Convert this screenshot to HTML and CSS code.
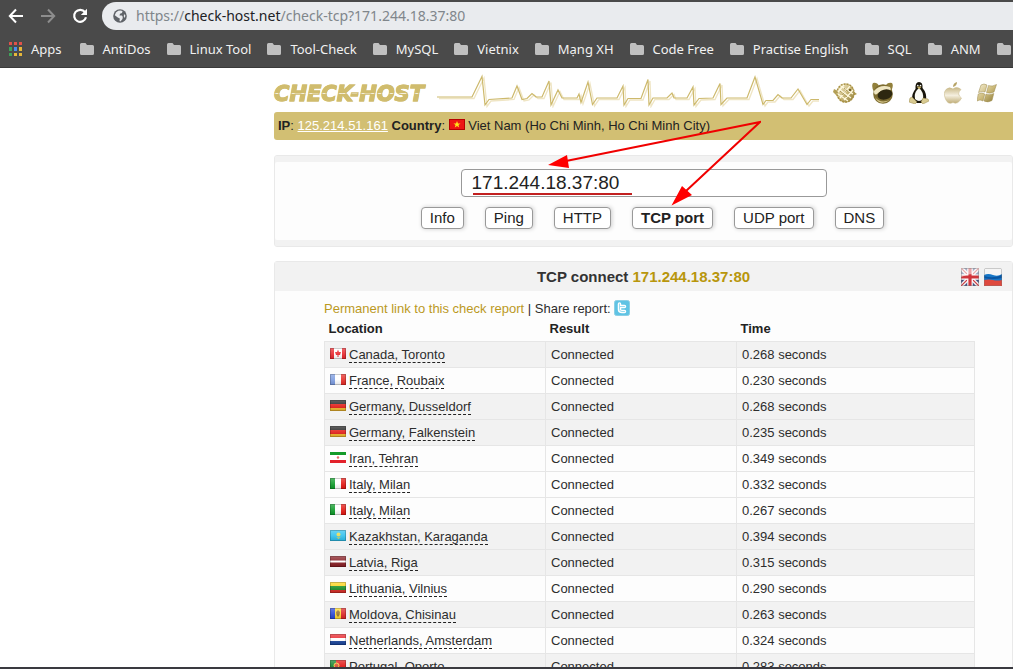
FILE: index.html
```html
<!DOCTYPE html>
<html lang="en">
<head>
<meta charset="utf-8">
<title>Check host - TCP connect</title>
<link rel="stylesheet" href="styles.css">
</head>
<body>
<svg class="defs" aria-hidden="true">
  <defs>
    <linearGradient id="gold" x1="0" y1="0" x2="1" y2="1"><stop offset="0" stop-color="#f6f0d8"/><stop offset=".5" stop-color="#cdbb7c"/><stop offset="1" stop-color="#8a7836"/></linearGradient>
    <linearGradient id="apple" x1="0" y1="0" x2="0" y2="1"><stop offset="0" stop-color="#c9b988"/><stop offset=".5" stop-color="#f5efdf"/><stop offset="1" stop-color="#c0ae78"/></linearGradient>
    <linearGradient id="gloss" x1="0" y1="0" x2="0" y2="1"><stop offset="0" stop-color="#fff" stop-opacity=".3"/><stop offset=".5" stop-color="#fff" stop-opacity=".12"/><stop offset="1" stop-color="#000" stop-opacity=".1"/></linearGradient>
    <symbol id="folder" viewBox="0 0 14 12"><path d="M1.500 0H5.500L7 2H12.500Q14 2 14 3.500V10.500Q14 12 12.500 12H1.500Q0 12 0 10.500V1.500Q0 0 1.500 0Z" fill="#c0c0c0"/></symbol>
    <symbol id="shine" viewBox="0 0 16 11"><rect width="16" height="11" fill="url(#gloss)"/><rect x=".5" y=".5" width="15" height="10" fill="none" stroke="#000" stroke-opacity=".2"/></symbol>
  </defs>
</svg>

<header class="browser">
  <div class="toolbar">
    <button class="nav" aria-label="Back"><svg width="16" height="16" viewBox="0 0 16 16"><path d="M15 8H2M8 1.500L1.800 8L8 14.500" fill="none" stroke="#fff" stroke-width="2"/></svg></button>
    <button class="nav" aria-label="Forward"><svg width="16" height="16" viewBox="0 0 16 16"><path d="M1 8H14M8 1.500L14.200 8L8 14.500" fill="none" stroke="#8d8d8d" stroke-width="2"/></svg></button>
    <button class="nav" aria-label="Reload"><svg width="16" height="16" viewBox="0 0 16 16"><path d="M13 4.200A6 6 0 1 0 14 9.300" fill="none" stroke="#fff" stroke-width="2.200"/><path d="M15 .8V7H8.800Z" fill="#fff"/></svg></button>
    <div class="omnibox">
      <svg width="14" height="14" viewBox="0 0 14 14"><circle cx="7" cy="7" r="6.800" fill="#5f6368"/><path d="M7.500 1.500L9.500 2L9 4L7 4.800L6.500 6.500H9L9.800 8L9.500 10L7.500 12.500L6.500 12L6.800 9.500L4.800 8.500L1.800 6.300Q2.400 3 5.200 1.800Z M11 5L12.400 6.500L11.800 9L10.800 7.500Z" fill="#e9ebee"/></svg>
      <div class="url" role="textbox" contenteditable="true" spellcheck="false" aria-label="Address">https://<b>check-host.net</b>/check-tcp?171.244.18.37:80</div>
    </div>
  </div>
  <nav class="bookmarks">
    <a href="#" class="apps"><svg width="13" height="14" viewBox="0 0 13 14"><path d="M0 0h3v3h-3zM5 0h3v3h-3zM10 0h3v3h-3z" fill="#e0524a"/><path d="M0 5h3v4h-3zM0 11h3v3h-3z" fill="#3fa35a"/><path d="M5 5h3v4h-3z" fill="#4a8df0"/><path d="M10 5h3v4h-3zM10 11h3v3h-3zM5 11h3v3h-3z" fill="#e6b73a"/></svg>Apps</a>
    <a href="#"><svg width="14" height="12"><use href="#folder"/></svg>AntiDos</a>
    <a href="#"><svg width="14" height="12"><use href="#folder"/></svg>Linux Tool</a>
    <a href="#"><svg width="14" height="12"><use href="#folder"/></svg>Tool-Check</a>
    <a href="#"><svg width="14" height="12"><use href="#folder"/></svg>MySQL</a>
    <a href="#"><svg width="14" height="12"><use href="#folder"/></svg>Vietnix</a>
    <a href="#"><svg width="14" height="12"><use href="#folder"/></svg>Mạng XH</a>
    <a href="#"><svg width="14" height="12"><use href="#folder"/></svg>Code Free</a>
    <a href="#"><svg width="14" height="12"><use href="#folder"/></svg>Practise English</a>
    <a href="#"><svg width="14" height="12"><use href="#folder"/></svg>SQL</a>
    <a href="#"><svg width="14" height="12"><use href="#folder"/></svg>ANM</a>
    <a href="#" aria-label="More"><svg width="14" height="12"><use href="#folder"/></svg></a>
  </nav>
</header>

<div class="viewport">
<main class="page">
  <div class="masthead">
    <a href="#" class="logo">CHECK-HOST</a>
    <svg class="pulse" width="382" height="34" viewBox="437 72 382 34" fill="none">
      <path transform="translate(2 1.500)" stroke="#efe5c4" stroke-width="1.300" d="M437 95H472L482 74.500L485 103L489 97.500L512 96L517 84L522 97.500L527 96.500L532 91.500L536 95H542L549 79L551 103L558 88L562 96H577L579 92L581 100.500L588 80L592.500 102.500L597 96H617L623 84L624 103L628 96.500H641L648 77.500L649 103L653 96H667L672 91L674 96H687L693 85L694 103L699 96.500L713 96L720 81.500L721 102.500L727 96H747L755 75L763 102.500L766 98.500H773L778 92.500L782 96H791L798 87L807 102.500L811 97.500H819"/>
      <path stroke="#cdb96c" stroke-width="1.200" d="M437 95H472L482 74.500L485 103L489 97.500L512 96L517 84L522 97.500L527 96.500L532 91.500L536 95H542L549 79L551 103L558 88L562 96H577L579 92L581 100.500L588 80L592.500 102.500L597 96H617L623 84L624 103L628 96.500H641L648 77.500L649 103L653 96H667L672 91L674 96H687L693 85L694 103L699 96.500L713 96L720 81.500L721 102.500L727 96H747L755 75L763 102.500L766 98.500H773L778 92.500L782 96H791L798 87L807 102.500L811 97.500H819"/>
    </svg>
    <div class="systems">
      <svg width="24" height="22" viewBox="0 0 24 22"><path d="M1 7L5 9L4 14L0 10ZM20 9L24 12L20 14Z" fill="#b39f55"/><ellipse cx="12.500" cy="11" rx="9" ry="9.500" fill="url(#gold)"/><ellipse cx="12.500" cy="11" rx="8.500" ry="9" fill="none" stroke="#a99245" stroke-width="1.500" stroke-dasharray="2 1"/><path d="M6 7L18 16M8 4L20 12M5 12L15 19M7 16L17 4M11 18L20 8M5 10L11 3" stroke="#fff9df" stroke-width="1.200"/><path d="M7 9L14 15M11 6L17 11M9 13L14 8" stroke="#97823a" stroke-dasharray="1 1"/><circle cx="17" cy="8" r="1" fill="#5a4c1b"/></svg>
      <svg width="22" height="22" viewBox="0 0 22 22"><path d="M1 1Q5 0 7 4L2 10Q-1 4 1 1ZM20 1Q16 0 14 3L19 9Q22 4 20 1Z" fill="#92803b"/><circle cx="11" cy="12" r="9.800" fill="#7d6c30"/><path d="M2 9Q8 2 18 5Q20 8 17 9Q10 7 5 12Q2 14 2 9Z" fill="#efe6c2"/><ellipse cx="13" cy="12.500" rx="7.500" ry="5" transform="rotate(-15 13 12.500)" fill="#2d2710"/><path d="M3 15Q8 22 18 18Q12 22 7 20Q4 18 3 15Z" fill="#d4c58b"/></svg>
      <svg width="20" height="22" viewBox="0 0 20 22"><path d="M10 0Q14 0 13.500 6Q18 11 17 18L13 21H6L3 17Q3 11 6.500 7Q6 0 10 0Z" fill="#17140a"/><path d="M10 6Q15 10 14 17Q10 21 6 17Q5 11 8 8Z" fill="#fbfbf5"/><path d="M7.500 4.500H12.500L10.500 7.500Z" fill="#c5b064"/><path d="M3 15L8 20L6 22L0 20L1 16ZM14 16L19 17L20 19L14 22L12 20Z" fill="#d8ca91" stroke="#9b8949" stroke-width=".5"/><circle cx="8.800" cy="3.500" r=".8" fill="#fff"/><circle cx="11.500" cy="3.500" r=".8" fill="#fff"/></svg>
      <svg width="18" height="22" viewBox="0 0 18 22"><path d="M9 5Q9 1 13 0Q13 4 9 5Z" fill="#b6a366"/><path d="M9 7Q13 4 17 7.500Q12 12 17.500 16Q14 23 9 20.500Q4 23 1.500 17Q-1 11 2 7.500Q5 4.500 9 7Z" fill="url(#apple)" stroke="#cbbc8e" stroke-width=".6"/></svg>
      <svg width="20" height="20" viewBox="0 0 20 20"><path d="M4 2Q7 0 10 2L8 9Q5 8 1.500 9.500ZM11.500 2.500Q15 4 19.500 1.500L17 9Q13 11 9.500 9.500ZM1.200 11Q5 9 7.800 11L6 18Q3 16 0 18ZM9 11Q13 12.500 16.800 10.500L15 17.500Q11 20 7 18Z" fill="url(#gold)" stroke="#9c8a4c" stroke-width=".5"/></svg>
    </div>
  </div>

  <p class="ipbar"><b>IP</b>: <a href="#">125.214.51.161</a> <b>Country</b>: <svg class="flag" width="16" height="11" viewBox="0 0 16 11"><path d="M0 0h16v11h-16z" fill="#ed1515"/><path d="M8 2L9 4.500H11.500L9.500 6L10.200 8.500L8 7L5.800 8.500L6.500 6L4.500 4.500H7Z" fill="#ffe21a"/><rect x=".5" y=".5" width="15" height="10" fill="none" stroke="#b80000"/></svg> Viet Nam (Ho Chi Minh, Ho Chi Minh City)</p>

  <form class="panel query">
    <input type="text" value="171.244.18.37:80" aria-label="Host" spellcheck="false">
    <div class="actions">
      <button type="button">Info</button>
      <button type="button">Ping</button>
      <button type="button">HTTP</button>
      <button type="button" class="active">TCP port</button>
      <button type="button">UDP port</button>
      <button type="button">DNS</button>
    </div>
  </form>

  <svg class="marks" width="214" height="88" viewBox="547 120 214 88" aria-hidden="true">
    <path d="M686 191L760 122L566 161" fill="none" stroke="#f00000" stroke-width="2"/>
    <path d="M548 165L567 155L569 168ZM671.500 205.500L682 186L692 195Z" fill="#f00"/>
  </svg>

  <section class="panel report">
    <header class="title">
      <h1>TCP connect <span>171.244.18.37:80</span></h1>
      <div class="langs">
        <button aria-label="English"><svg width="18" height="18" viewBox="0 0 18 18"><rect width="18" height="18" rx="1" fill="#3d4d80"/><path d="M0 0L18 18M18 0L0 18" stroke="#f4f0f0" stroke-width="4"/><path d="M0 0L18 18M18 0L0 18" stroke="#cc3b42" stroke-width="1.200"/><path d="M9 0V18M0 9H18" stroke="#fff" stroke-width="5.500"/><path d="M9 0V18M0 9H18" stroke="#d0353c" stroke-width="3.200"/><path d="M0 0H18V6Q9 5 0 9Z" fill="#fff" opacity=".55"/><rect x=".5" y=".5" width="17" height="17" rx="1" fill="none" stroke="#777" stroke-opacity=".4"/></svg></button>
        <button aria-label="Russian"><svg width="18" height="18" viewBox="0 0 18 18"><rect width="18" height="18" rx="1" fill="#f5f5f5"/><path d="M0 7Q4 5 9 7T18 6V13H0Z" fill="#1676c7"/><path d="M0 12Q5 11 9 12T18 12V18H0Z" fill="#df493e"/><path d="M0 8Q9 11 18 7V10Q9 12 0 10Z" fill="#0a55a2"/><rect x=".5" y=".5" width="17" height="17" rx="1" fill="none" stroke="#777" stroke-opacity=".35"/></svg></button>
      </div>
    </header>
    <div class="content">
      <p class="share"><a href="#">Permanent link to this check report</a> | Share report: <a href="#" aria-label="Twitter"><svg width="16" height="16" viewBox="0 0 16 16"><rect x=".5" y=".5" width="15" height="15" rx="2" fill="#5fc3e4" stroke="#8bcfe5"/><path d="M5.500 4V9.500Q5.500 11.500 8 11.500H10.500M5.500 6.500H10.500" fill="none" stroke="#fff" stroke-width="3.500" stroke-linecap="round"/><path d="M5.500 4V9.500Q5.500 11.500 8 11.500H10.500M5.500 6.500H10.500" fill="none" stroke="#9bdcf0" stroke-width="1" stroke-linecap="round"/></svg></a></p>
      <table>
        <colgroup><col class="c-loc"><col class="c-res"><col></colgroup>
        <thead><tr><th scope="col">Location</th><th scope="col">Result</th><th scope="col">Time</th></tr></thead>
        <tbody>
          <tr class="shade"><td><svg class="flag" width="16" height="11" viewBox="0 0 16 11"><path d="M0 0h16v11H0z" fill="#fff"/><path d="M0 0h4v11H0zM12 0h4v11h-4z" fill="#e8252b"/><path d="M8 1.500L9 4L11 4L10 7H8.500V9H7.500V7H6L5 4L7 4Z" fill="#e8252b"/><use href="#shine"/></svg><span>Canada, Toronto</span></td><td>Connected</td><td>0.268 seconds</td></tr>
          <tr><td><svg class="flag" width="16" height="11" viewBox="0 0 16 11"><path d="M0 0h16v11H0z" fill="#fff"/><path d="M0 0h5v11H0z" fill="#7b9be0"/><path d="M11 0h5v11h-5z" fill="#e62a25"/><use href="#shine"/></svg><span>France, Roubaix</span></td><td>Connected</td><td>0.230 seconds</td></tr>
          <tr class="shade"><td><svg class="flag" width="16" height="11" viewBox="0 0 16 11"><path d="M0 0h16v4H0z" fill="#222"/><path d="M0 4h16v4H0z" fill="#e31b15"/><path d="M0 8h16v3H0z" fill="#f0b62b"/><use href="#shine"/></svg><span>Germany, Dusseldorf</span></td><td>Connected</td><td>0.268 seconds</td></tr>
          <tr class="shade"><td><svg class="flag" width="16" height="11" viewBox="0 0 16 11"><path d="M0 0h16v4H0z" fill="#222"/><path d="M0 4h16v4H0z" fill="#e31b15"/><path d="M0 8h16v3H0z" fill="#f0b62b"/><use href="#shine"/></svg><span>Germany, Falkenstein</span></td><td>Connected</td><td>0.235 seconds</td></tr>
          <tr><td><svg class="flag" width="16" height="11" viewBox="0 0 16 11"><path d="M0 0h16v11H0z" fill="#fff"/><path d="M0 0h16v3H0z" fill="#149b2a"/><path d="M0 8h16v3H0z" fill="#e3222b"/><circle cx="8" cy="5.500" r="1.200" fill="#e46a6a"/></svg><span>Iran, Tehran</span></td><td>Connected</td><td>0.349 seconds</td></tr>
          <tr><td><svg class="flag" width="16" height="11" viewBox="0 0 16 11"><path d="M0 0h16v11H0z" fill="#fff"/><path d="M0 0h5v11H0z" fill="#0b9a27"/><path d="M11 0h5v11h-5z" fill="#e3140f"/><use href="#shine"/></svg><span>Italy, Milan</span></td><td>Connected</td><td>0.332 seconds</td></tr>
          <tr><td><svg class="flag" width="16" height="11" viewBox="0 0 16 11"><path d="M0 0h16v11H0z" fill="#fff"/><path d="M0 0h5v11H0z" fill="#0b9a27"/><path d="M11 0h5v11h-5z" fill="#e3140f"/><use href="#shine"/></svg><span>Italy, Milan</span></td><td>Connected</td><td>0.267 seconds</td></tr>
          <tr class="shade"><td><svg class="flag" width="16" height="11" viewBox="0 0 16 11"><path d="M0 0h16v11H0z" fill="#2cc0ee"/><circle cx="8.500" cy="4.500" r="2" fill="#e6d84b"/><path d="M5 6Q8.500 9 12 6L8.500 9Z" fill="#e6d84b"/><use href="#shine"/></svg><span>Kazakhstan, Karaganda</span></td><td>Connected</td><td>0.394 seconds</td></tr>
          <tr class="shade"><td><svg class="flag" width="16" height="11" viewBox="0 0 16 11"><path d="M0 0h16v11H0z" fill="#861a20"/><path d="M0 4.500h16v2H0z" fill="#fff"/><use href="#shine"/></svg><span>Latvia, Riga</span></td><td>Connected</td><td>0.315 seconds</td></tr>
          <tr><td><svg class="flag" width="16" height="11" viewBox="0 0 16 11"><path d="M0 0h16v4H0z" fill="#fbd316"/><path d="M0 4h16v4H0z" fill="#168c22"/><path d="M0 8h16v3H0z" fill="#d32a23"/><use href="#shine"/></svg><span>Lithuania, Vilnius</span></td><td>Connected</td><td>0.290 seconds</td></tr>
          <tr class="shade"><td><svg class="flag" width="16" height="11" viewBox="0 0 16 11"><path d="M0 0h5v11H0z" fill="#2746d6"/><path d="M5 0h6v11H5z" fill="#ffd92e"/><path d="M11 0h5v11h-5z" fill="#dc2424"/><path d="M8 2L10 4L9.500 7L8 9L6.500 7L6 4Z" fill="#96702c"/><use href="#shine"/></svg><span>Moldova, Chisinau</span></td><td>Connected</td><td>0.263 seconds</td></tr>
          <tr><td><svg class="flag" width="16" height="11" viewBox="0 0 16 11"><path d="M0 0h16v4H0z" fill="#e8232a"/><path d="M0 4h16v3H0z" fill="#fff"/><path d="M0 7h16v4H0z" fill="#174299"/><use href="#shine"/></svg><span>Netherlands, Amsterdam</span></td><td>Connected</td><td>0.324 seconds</td></tr>
          <tr class="shade"><td><svg class="flag" width="16" height="11" viewBox="0 0 16 11"><path d="M0 0h16v11H0z" fill="#e2120f"/><path d="M0 0h6v11H0z" fill="#12802a"/><circle cx="6.500" cy="5.500" r="2.500" fill="#d84a30" stroke="#f2d23b"/><use href="#shine"/></svg><span>Portugal, Oporto</span></td><td>Connected</td><td>0.283 seconds</td></tr>
        </tbody>
      </table>
    </div>
  </section>
</main>
</div>
<div class="taskbar"></div>
</body>
</html>
```

FILE: styles.css
```css
* { box-sizing: border-box; }

body {
  margin: 0;
  height: 100vh;
  display: flex;
  flex-direction: column;
  overflow: hidden;
  background: #fff;
  color: #2d2d2d;
  font: 13px/15px "Liberation Sans", Arial, sans-serif;
}

button { padding: 0; border: 0; background: none; font: inherit; color: inherit; }
p, h1 { margin: 0; }
.defs { position: absolute; width: 0; height: 0; }

/* Browser chrome */
.browser {
  flex: none;
  padding-top: 2px;
  background: #4a4a4a;
  border-bottom: 1px solid #3a3a3a;
  font-family: "Noto Sans", sans-serif;
}
.toolbar { display: flex; align-items: center; gap: 16px; height: 28px; padding-left: 8px; }
.nav { display: flex; }
.omnibox {
  flex: 1;
  display: flex;
  align-items: center;
  gap: 9px;
  height: 28px;
  margin-left: -2px;
  padding-left: 11px;
  border-radius: 14px 0 0 14px;
  background: #e9ebee;
}
.url { font-size: 14px; line-height: 20px; color: #80868b; white-space: nowrap; outline: 0; }
.url b { font-weight: 400; color: #202124; }
.bookmarks { display: flex; align-items: center; gap: 16px; height: 37px; padding-left: 9px; overflow: hidden; }
.bookmarks a {
  flex: none;
  display: flex;
  align-items: center;
  gap: 9px;
  color: #f1f1f1;
  font-size: 13px;
  line-height: 18px;
  text-decoration: none;
  white-space: nowrap;
}
.bookmarks .apps { margin-right: 2px; }

/* Page */
.viewport { flex: 1; min-height: 0; overflow: hidden; }
.page { position: relative; margin-left: 274px; }
.masthead { display: flex; align-items: center; height: 44px; padding-top: 6px; }
.logo {
  width: 163px;
  padding-top: 2px;
  font: italic bold 21px/24px "DejaVu Sans", sans-serif;
  text-decoration: none;
  color: transparent;
  -webkit-text-stroke: 1px #d0bc6d;
  background: linear-gradient(#d0bc6d 0 13px, #f6f0dc 13px 14px, #d0bc6d 14px);
  -webkit-background-clip: text;
  background-clip: text;
}
.pulse { flex: none; margin-bottom: 4px; }
.systems { display: flex; align-items: center; gap: 15px; margin-left: 14px; }

.ipbar {
  height: 28px;
  padding: 0 4px;
  border-radius: 3px 0 0 3px;
  background: #d2bf73;
  color: #222;
  line-height: 28px;
}
.ipbar a { color: #fff; }
.flag { vertical-align: 0; }

.panel { border: 1px solid #e9e9e9; border-radius: 3px; background: #fdfdfd; }
.query {
  display: flex;
  flex-direction: column;
  align-items: center;
  gap: 10px;
  height: 92px;
  margin-top: 15px;
  padding-top: 13px;
  box-shadow: inset 0 6px #f2f2f2, inset 0 -6px #f2f2f2;
}
.query input {
  width: 366px;
  height: 28px;
  padding: 0 10px;
  border: 1px solid #999;
  border-radius: 4px;
  background: linear-gradient(#c22020, #c22020) 11px 23px / 159px 2px no-repeat #fff;
  color: #222;
  font: 19px/26px "Liberation Sans", Arial, sans-serif;
}
.actions { display: flex; gap: 21px; padding-left: 18px; }
.actions button {
  height: 22px;
  padding: 0 8px;
  border: 1px solid #999;
  border-radius: 4px;
  background: #fff;
  box-shadow: 1px 0 4px #ccc;
  color: #222;
  font-size: 15px;
  line-height: 20px;
  white-space: nowrap;
}
.actions .active { font-weight: bold; }
.marks { position: absolute; left: 273px; top: 52px; pointer-events: none; }

.report { margin-top: 14px; }
.title {
  display: grid;
  grid-template-columns: 1fr auto 1fr;
  align-items: center;
  height: 29px;
  background: #f2f2f2;
}
.title h1 { grid-column: 2; font-size: 15px; line-height: 18px; color: #333; }
.title h1 span { color: #b8960c; }
.langs { display: flex; justify-content: flex-end; gap: 5px; padding-right: 10px; }
.langs button { display: flex; }

.content { padding: 8px 37px 0 49px; }
.share { display: flex; align-items: center; height: 18px; white-space: pre; }
.share a { color: #bb991f; text-decoration: none; display: flex; }

table { width: 100%; border-collapse: collapse; table-layout: fixed; }
.c-loc { width: 221px; }
.c-res { width: 191px; }
th { padding: 4px 4px 5px; text-align: left; color: #222; }
td { height: 26px; padding: 5px; border: 1px solid #e6e6e6; white-space: nowrap; }
tr { background: #fdfdfd; }
.shade { background: #f2f2f2; }
td .flag { margin-right: 3px; vertical-align: 0; }
td span { border-bottom: 1px dashed #222; }

.taskbar { flex: none; height: 2px; background: #3a3a40; }
```
